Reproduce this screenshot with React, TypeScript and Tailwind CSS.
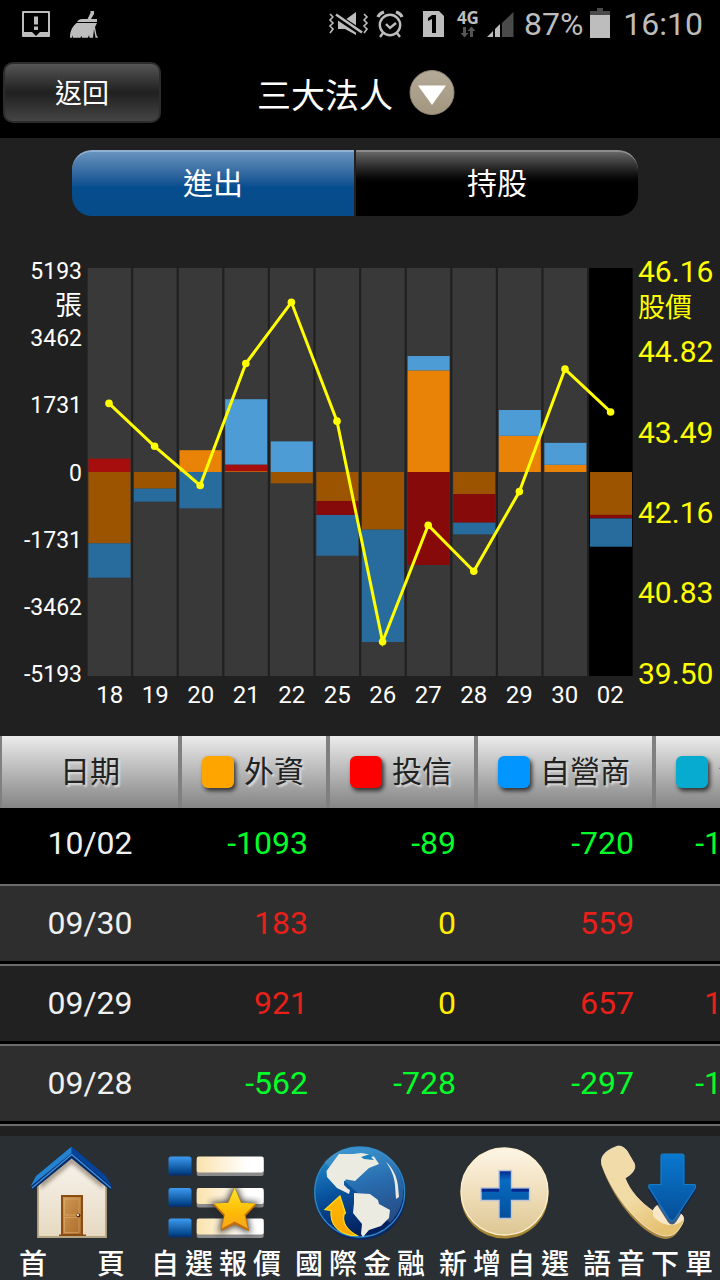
import type { ReactNode } from "react";

type Day = {
  day: string;
  up: [number, number, number];
  down: [number, number, number];
  price: number;
};

// Stacks are ordered from the zero line outwards: foreign, trust, dealer.
const days: Day[] = [
  { day: "18", up: [0, 340, 0], down: [1816, 0, 874], price: 43.95 },
  { day: "19", up: [0, 0, 0], down: [423, 0, 332], price: 43.25 },
  { day: "20", up: [555, 0, 0], down: [0, 0, 924], price: 42.61 },
  { day: "21", up: [20, 170, 1663], down: [0, 0, 0], price: 44.6 },
  { day: "22", up: [0, 0, 780], down: [288, 0, 0], price: 45.6 },
  { day: "25", up: [0, 0, 0], down: [738, 356, 1037], price: 43.66 },
  { day: "26", up: [0, 0, 0], down: [1468, 0, 2860], price: 40.06 },
  { day: "27", up: [2588, 0, 364], down: [0, 2367, 0], price: 41.96 },
  { day: "28", up: [0, 0, 0], down: [562, 728, 297], price: 41.21 },
  { day: "29", up: [921, 0, 657], down: [0, 0, 0], price: 42.51 },
  { day: "30", up: [183, 0, 559], down: [0, 0, 0], price: 44.51 },
  { day: "02", up: [0, 0, 0], down: [1093, 89, 720], price: 43.81 },
];

const volumeAxis = ["5193", "張", "3462", "", "1731", "", "0", "", "-1731", "", "-3462", "", "-5193"];
const priceAxis = ["46.16", "44.82", "43.49", "42.16", "40.83", "39.50"];

const rows = [
  { date: "10/02", values: [-1093, -89, -720, -1902] },
  { date: "09/30", values: [183, 0, 559, 742] },
  { date: "09/29", values: [921, 0, 657, 1578] },
  { date: "09/28", values: [-562, -728, -297, -1587] },
];

const upColors = ["#e88307", "#a60d0d", "#4d9cd5"];
const downColors = ["#9c5400", "#870a0b", "#286c9e"];

function Chart() {
  const mid = 204;
  const scale = 204 / 5193;
  const pitch = 45.6;
  const points = days.map((d, i) => ({
    x: 22 + i * pitch,
    y: 408 - ((d.price - 39.5) / 6.66) * 408,
  }));
  return (
    <svg viewBox="0 0 546 408" className="block h-auto w-full" role="img" aria-label="三大法人進出">
      {days.map((d, i) => {
        const x = 0.6 + i * pitch;
        const bars: ReactNode[] = [];
        let top = mid;
        d.up.forEach((v, k) => {
          top -= v * scale;
          if (v) bars.push(<rect key={`u${k}`} x={x + 0.8} y={top} width="42" height={v * scale} fill={upColors[k]} />);
        });
        let bottom = mid;
        d.down.forEach((v, k) => {
          if (v) bars.push(<rect key={`d${k}`} x={x + 0.8} y={bottom} width="42" height={v * scale} fill={downColors[k]} />);
          bottom += v * scale;
        });
        return (
          <g key={d.day}>
            <rect x={x} y="0" width="43.4" height="408" fill={i === days.length - 1 ? "#000" : "#393939"} />
            {bars}
          </g>
        );
      })}
      <polyline points={points.map((p) => `${p.x},${p.y}`).join(" ")} fill="none" stroke="#ffff00" strokeWidth="3" />
      {points.map((p) => (
        <circle key={p.x} cx={p.x} cy={p.y} r="3.8" fill="#ffff00" />
      ))}
    </svg>
  );
}

function StatusBar() {
  return (
    <div className="flex h-12 items-center pr-[17px] pl-[22px] text-[#bdbdbd]">
      <svg width="28" height="32" viewBox="0 0 28 32" fill="currentColor">
        <path fillRule="evenodd" d="M1 3h26a1 1 0 0 1 1 1v24a1 1 0 0 1-1 1H1a1 1 0 0 1-1-1V4a1 1 0 0 1 1-1Zm1 2v19h8l4 4 4-4h8V5Z" />
        <path d="M12 8.500h4v8h-4ZM12 18.500h4v3.500h-4Z" />
      </svg>
      <svg width="28" height="32" viewBox="0 0 28 32" className="ml-5" fill="currentColor">
        <path d="M20.500 3h3.500v3l-3 5h6v3H7c1-2 3-3 5-3h5.500l3-6Z" />
        <path d="M6.500 15H27l-2 4 1.500 8 1.500 2.700h-2.500L24 21l-1 8.700h-3.500L19 27l-1 2.700h-6l-.5-2-1 2H3L3 27l-1 2.700H0C0 22 3 18 6.500 15Z" />
      </svg>
      <div className="ml-auto flex items-center">
        <svg width="42" height="32" viewBox="0 0 42 32" fill="none" stroke="currentColor">
          <path d="M3 6l3 3-3 3 3 3-3 3 3 3-3 4M37 6l3 3-3 3 3 3-3 3 3 3-3 4" strokeWidth="1.600" />
          <path d="M11 12h7l11-8v23l-11-6h-7Z" fill="currentColor" stroke="none" />
          <path d="M8 7l27 18" stroke="#000" strokeWidth="6" />
          <path d="M9 6.500l26 18" strokeWidth="2.600" />
        </svg>
        <svg width="28" height="32" viewBox="0 0 28 32" className="ml-[7px]" fill="none" stroke="currentColor">
          <circle cx="14" cy="17" r="10.200" strokeWidth="2.400" />
          <path d="M10 16l4 4 6-5" strokeWidth="2.400" />
          <path d="M2 9c1-3 3-4 6-5M26 9c-1-3-3-4-6-5" strokeWidth="3.400" />
          <path d="M7 25l-3 4M21 25l3 4" strokeWidth="2.400" />
        </svg>
        <svg width="21" height="32" viewBox="0 0 21 32" className="ml-[19px]">
          <path d="M0 3h16l5 5v21H0Z" fill="currentColor" />
          <path d="M9 7h4v18H9V11l-4 2v-3Z" fill="#000" />
        </svg>
        <div className="ml-[13px] flex flex-col items-center">
          <span className="font-['Open_Sans'] text-[17px] leading-4 font-bold">4G</span>
          <svg width="16" height="12" viewBox="0 0 16 12" fill="#555">
            <path d="M3 1h3v6h2.500l-4 4.500-4-4.500H3ZM10 11h3V5h2.500l-4-4.500-4 4.500H10Z" />
          </svg>
        </div>
        <svg width="27" height="32" viewBox="0 0 27 32" className="ml-2" fill="currentColor">
          <path d="M0 29l6-6v6ZM8 29v-8l5-5v13Z" />
          <path d="M15 29V15L26.500 4v25Z" fill="#4a4a4a" />
        </svg>
        <span className="ml-[10px] text-[32px] leading-10">87%</span>
        <svg width="20" height="32" viewBox="0 0 20 32" className="ml-[7px]">
          <path d="M7 0h6v3h7v4H0V3h7Z" fill="#4a4a4a" />
          <path d="M0 7h20v23H0Z" fill="currentColor" />
        </svg>
        <span className="ml-[13px] text-[32px] leading-10">16:10</span>
      </div>
    </div>
  );
}

function Header() {
  return (
    <header className="bg-black pb-[15px]">
      <StatusBar />
      <div className="flex items-center pt-[14px] pl-[3px]">
        <button
          type="button"
          className="h-[61px] w-[158px] rounded-[10px] border-2 border-[#2c2c2c] bg-linear-to-b from-[#565656] via-[#202020] to-[#454545] pt-1 text-[27px]"
        >
          返回
        </button>
        <div className="flex flex-1 items-center justify-center gap-4">
          <h1 className="pt-1.5 text-[34px] leading-10">三大法人</h1>
          <button type="button" aria-label="選單">
            <svg width="46" height="46" viewBox="0 0 46 46">
              <defs>
                <linearGradient id="dropFace" x1="0" y1="0" x2="0" y2="1">
                  <stop offset="0" stopColor="#b5aa98" />
                  <stop offset="1" stopColor="#a2967f" />
                </linearGradient>
              </defs>
              <circle cx="23" cy="22.500" r="22" fill="url(#dropFace)" stroke="#8f8777" strokeWidth="1" />
              <path d="M9 15.500h28L23 35Z" fill="#fff" />
            </svg>
          </button>
        </div>
        <div className="w-[169px]" />
      </div>
    </header>
  );
}

function HeadCell({ label, swatch, width }: { label: string; swatch: string; width: string }) {
  return (
    <th scope="col" className={`${width} h-[72px] border-x-2 border-[#808080] p-0 pl-5 font-normal`}>
      <span className="flex items-center gap-[10px] whitespace-nowrap">
        <span className={`size-8 shrink-0 rounded-md shadow-[2px_3px_4px_#333] ${swatch}`} />
        {label}
      </span>
    </th>
  );
}

function tone(v: number) {
  if (v > 0) return "text-[#e92019]";
  if (v < 0) return "text-[#00ff2a]";
  return "text-[#ffee00]";
}

function DataTable() {
  return (
    <div className="overflow-x-auto [scrollbar-width:none]">
      <table className="w-[796px] min-w-full table-fixed border-separate border-spacing-0">
        <thead className="bg-linear-to-b from-[#ececec] to-[#858585] text-[30px] leading-9 text-[#222] [text-shadow:2px_2px_2px_#ddd]">
          <tr>
            <th scope="col" className="h-[72px] w-[180px] border-x-2 border-[#808080] p-0 font-normal">
              日期
            </th>
            <HeadCell label="外資" swatch="bg-[#ffa500]" width="w-[148px]" />
            <HeadCell label="投信" swatch="bg-[#ff0000]" width="w-[148px]" />
            <HeadCell label="自營商" swatch="bg-[#0095ff]" width="w-[178px]" />
            <HeadCell label="合計" swatch="bg-[#08abd0]" width="w-[142px]" />
          </tr>
        </thead>
        <tbody className="text-[32px] leading-10">
          {rows.map((r, i) => {
            const first = i === 0;
            const cell = first
              ? "h-[76px] bg-black pt-0 pb-[6px]"
              : i % 2
                ? "h-20 border-t-2 border-b-[3px] border-t-[#6c6c6c] border-b-black bg-[#2e2e2e] pt-0 pb-px"
                : "h-20 border-t-2 border-b-[3px] border-t-[#6c6c6c] border-b-black bg-[#212121] pt-0 pb-px";
            return (
              <tr key={r.date}>
                <th scope="row" className={`${cell} px-0 text-center font-normal text-[#f0f0f0]`}>
                  {r.date}
                </th>
                {r.values.map((v, k) => (
                  <td key={k} className={`${cell} pr-5 pl-0 text-right ${tone(v)}`}>
                    {v}
                  </td>
                ))}
              </tr>
            );
          })}
        </tbody>
      </table>
      <div className="h-3 border-t-2 border-[#6c6c6c]" />
    </div>
  );
}

function HouseIcon() {
  return (
    <svg width="96" height="100" viewBox="0 0 96 100">
      <defs>
        <linearGradient id="wall" x1="0" y1="0" x2="0" y2="1">
          <stop offset="0" stopColor="#f8f4ee" />
          <stop offset="1" stopColor="#e6d9c1" />
        </linearGradient>
        <linearGradient id="door" x1="0" y1="0" x2="1" y2="1">
          <stop offset="0" stopColor="#d09a55" />
          <stop offset="1" stopColor="#ab6b2a" />
        </linearGradient>
        <filter id="soft" x="-20%" y="-20%" width="140%" height="140%">
          <feGaussianBlur stdDeviation="2" />
        </filter>
      </defs>
      <path d="M14 94V40L47.700 13 82 40v54Z" fill="url(#wall)" stroke="#b5a582" strokeWidth="1.800" />
      <path d="M16 46 47.700 20 80 46v-7L47.700 14 16 39Z" fill="#6b5a44" opacity=".65" filter="url(#soft)" />
      <path d="M47.700 3.500 12 33 6.500 43.500 9 47 47.700 15.500 86 47l2.500-3L82 33Z" fill="#062a64" />
      <path d="M47.700 3.500 12 33 6.500 43.500 47.700 10Z" fill="#2482cf" />
      <path d="M47.700 3.500 82 33l6.500 11L47.700 10Z" fill="#06439a" />
      <path d="M8 45 47.700 11.500 87 45" fill="none" stroke="#3d8fdc" strokeWidth="1.400" />
      <path d="M35 91.500h27V93H35Z" fill="#8a4c13" />
      <rect x="38" y="53" width="20" height="39" fill="url(#door)" stroke="#8a4c13" strokeWidth="2" />
      <rect x="40.500" y="56" width="14.500" height="16" fill="none" stroke="#e2b578" strokeWidth=".5" />
      <rect x="40.500" y="74.500" width="14.500" height="15" fill="none" stroke="#e2b578" strokeWidth=".5" />
      <circle cx="54.500" cy="72.500" r="2" fill="#4e2809" />
      <circle cx="54" cy="72" r="1" fill="#fff" />
    </svg>
  );
}

function ListIcon() {
  return (
    <svg width="96" height="100" viewBox="0 0 96 100">
      <defs>
        <linearGradient id="block" x1="0" y1="0" x2="0" y2="1">
          <stop offset="0" stopColor="#3d9af0" />
          <stop offset=".8" stopColor="#05498f" />
          <stop offset="1" stopColor="#062c6c" />
        </linearGradient>
        <linearGradient id="bar" x1="0" y1="0" x2="1" y2="0">
          <stop offset="0" stopColor="#fbe2ac" />
          <stop offset=".75" stopColor="#fff" />
        </linearGradient>
        <linearGradient id="star" x1="0" y1="0" x2="0" y2="1">
          <stop offset="0" stopColor="#ffe32a" />
          <stop offset=".6" stopColor="#fdbb06" />
          <stop offset="1" stopColor="#f7a71a" />
        </linearGradient>
        <filter id="starGlow" x="-30%" y="-30%" width="160%" height="160%">
          <feGaussianBlur stdDeviation="3" />
        </filter>
      </defs>
      {[13.5, 45, 75.5].map((y) => (
        <g key={y}>
          <rect x=".5" y={y} width="23" height="19" rx="2.500" fill="url(#block)" />
          <rect x="28.700" y={y + 3} width="67" height="16.500" rx="2" fill="#8b8b8b" />
          <rect x="28.700" y={y} width="67" height="16" rx="2" fill="url(#bar)" />
        </g>
      ))}
      <path d="M66.700 45 73 59.700 88 61 77 72l3.300 15.700L66.700 80.500 53 87.700 56.300 72 45.500 61 60 59.700Z" fill="#222" stroke="#222" strokeWidth="4" opacity=".8" filter="url(#starGlow)" />
      <path d="M66.700 46 73 60.500 87.500 61.700 77 72.700l3.300 14.500L66.700 80.500 53.500 87.200 56.500 72.700 46 61.700 60.300 60.500Z" fill="#c26e0c" stroke="#c26e0c" strokeWidth="1.500" strokeLinejoin="round" />
      <path d="M66.700 45 73 59.700 87.500 60.500 76.500 71.500l3.300 14L66.700 78.500 53.700 85.500 56.800 71.500 46 60.500 60.300 59.700Z" fill="url(#star)" />
    </svg>
  );
}

function GlobeIcon() {
  return (
    <svg width="96" height="100" viewBox="0 0 96 100">
      <defs>
        <linearGradient id="sea" x1="0" y1="0" x2=".3" y2="1">
          <stop offset="0" stopColor="#2a9ad6" />
          <stop offset=".55" stopColor="#07509b" />
          <stop offset="1" stopColor="#05205f" />
        </linearGradient>
        <linearGradient id="turn" x1="0" y1="0" x2="0" y2="1">
          <stop offset="0" stopColor="#ffb800" />
          <stop offset="1" stopColor="#f9a602" />
        </linearGradient>
      </defs>
      <circle cx="48.500" cy="51.500" r="45.500" fill="#0a2763" />
      <circle cx="47.700" cy="49" r="45" fill="url(#sea)" stroke="#2b86c4" strokeWidth="1.300" />
      <path d="M12 19C28 1 62-2 80 18c15 18 16 42-2 62Z" fill="#7db4dd" opacity=".28" />
      <path d="M14.500 28 24 15l3-4 14 0 8-1 12 2 6 9-10 4-14 13-11-2 2 0 0 0-1 2-1 0 0 4 4 4 2 1-1 4-12-6-10-11Z" fill="#ecebe2" />
      <path d="M49 14l9-3 5 2-4 1 3 3-10-1Z" fill="#1c7fbd" />
      <path d="M42 50l16 1 8 6 1 4 11 6-1 8-8 8-12 4-6 7-2-3 1-10-9-11 1-10Z" fill="#ecebe2" />
      <path d="M74 19c6 5 11 14 12 24l1 11-3 2-1-14c-1-9-4-16-9-23Z" fill="#ecebe2" />
      <path d="M28 53 13 66.500l6 1c-1 13 6 22 20 25h6c-9-5-15-12-13-21l1.500-1.500Z" fill="url(#turn)" stroke="#ffdf1a" strokeWidth="1.200" />
    </svg>
  );
}

function PlusIcon() {
  return (
    <svg width="96" height="100" viewBox="0 0 96 100">
      <defs>
        <linearGradient id="coin" x1="0" y1="0" x2="0" y2="1">
          <stop offset="0" stopColor="#fdf5e6" />
          <stop offset=".5" stopColor="#f0dfbb" />
          <stop offset="1" stopColor="#dcc692" />
        </linearGradient>
        <linearGradient id="cross" x1="0" y1="0" x2="0" y2="1">
          <stop offset="0" stopColor="#06278c" />
          <stop offset=".2" stopColor="#086ac0" />
          <stop offset="1" stopColor="#04509c" />
        </linearGradient>
      </defs>
      <circle cx="48.500" cy="51.500" r="44" fill="#a98936" />
      <circle cx="48.500" cy="48.500" r="43.500" fill="url(#coin)" stroke="#fff0cf" strokeWidth="1.300" />
      <path d="M43 27.500h12.500V45H73.500v12.500h-18v18H43v-18H25V45h18Z" fill="url(#cross)" stroke="#bfc4d6" strokeWidth="1.400" />
      <path d="M25.700 45.700H43v3H25.700ZM55.500 45.700h17.300v3H55.500Z" fill="#06278c" />
    </svg>
  );
}

function PhoneIcon() {
  return (
    <svg width="96" height="100" viewBox="0 0 96 100">
      <defs>
        <linearGradient id="handset" x1="0" y1="0" x2=".6" y2="1">
          <stop offset="0" stopColor="#f0dbab" />
          <stop offset=".6" stopColor="#f1dba5" />
          <stop offset="1" stopColor="#e5c172" />
        </linearGradient>
        <linearGradient id="arrow" x1="0" y1="0" x2="0" y2="1">
          <stop offset="0" stopColor="#0a78cf" />
          <stop offset="1" stopColor="#064e98" />
        </linearGradient>
      </defs>
      <path d="M1 21c0-9 8-14 17-18 4 0 7 2 9 5l7 12c3 6-3 12-9 15 5 13 15 24 28 33 2-5 6-8 11-5l17 8c4 3 3 8 0 13-4 7-8 12-16 12C46 94 15 63 1 21Z" fill="#a58440" />
      <path d="M1.500 17c1-7 8-11 16.500-14 4 0 7 2 9 5l7 12c3 6-3 12-9 15 5 13 15 24 28 33 2-5 6-8 11-5l17 8c4 3 3 8 0 12-4 7-8 10-16 10C46 91 15 58 2 22Z" fill="url(#handset)" stroke="#f7e9c8" strokeWidth=".8" />
      <path d="M53 68c2-5 6-8 11-5l17 8c2 2 3 4 2 6-8 9-23 5-30-4Z" fill="#f6e8c6" />
      <path d="M62 13h21q2 0 2 2v28h10q2 1 0 4L76 77q-4 5-8 0L49 47q-2-4 1-4h11V15q0-2 1-2Z" fill="#082765" transform="translate(0 2)" opacity=".75" />
      <path d="M63 11h19q2 0 2 2v28.500h10.500q2 1 .5 4L75 76q-3 4-6 0L49.500 45.500q-2-3 .5-4H61V13q0-2 2-2Z" fill="url(#arrow)" stroke="#147ec8" strokeWidth="1.200" />
    </svg>
  );
}

const tabs = [
  { label: "首頁", width: "w-[106px]", icon: <HouseIcon /> },
  { label: "自選報價", width: "w-[130px]", icon: <ListIcon /> },
  { label: "國際金融", width: "w-[130px]", icon: <GlobeIcon /> },
  { label: "新增自選", width: "w-[130px]", icon: <PlusIcon /> },
  { label: "語音下單", width: "w-[130px]", icon: <PhoneIcon /> },
];

export default function App() {
  return (
    <div className="flex min-h-screen flex-col bg-[#202020] font-[Roboto,'Noto_Sans_CJK_TC',sans-serif] text-white">
      <Header />
      <main className="flex-1">
        <div className="flex gap-[2px] pt-3 pr-[82px] pl-[72px] text-[30px] leading-9 [text-shadow:1px_3px_3px_rgba(0,0,0,0.6)]">
          <button
            type="button"
            className="h-[66px] flex-1 rounded-l-[20px] border-t-2 border-[#8fb0d2] bg-linear-to-b from-[#6793be] via-[#064d8d] via-55% to-[#064b8a]"
          >
            進出
          </button>
          <button
            type="button"
            className="h-[66px] flex-1 rounded-r-[20px] border-t-2 border-[#8c8c8c] bg-linear-to-b from-[#666] via-black via-55% to-black"
          >
            持股
          </button>
        </div>

        <section className="flex h-[520px] items-start pt-[38px]">
          <div className="grid h-[437px] w-[87px] shrink-0 grid-rows-13 pr-[5px] text-right text-[23px] leading-9">
            {volumeAxis.map((t, i) => (
              <span key={i} className={t === "張" ? "text-[27px]" : undefined}>
                {t}
              </span>
            ))}
          </div>
          <div className="min-w-0 flex-1 pt-[14px]">
            <Chart />
            <div className="grid grid-cols-12 text-center text-[24px] leading-[38px]">
              {days.map((d) => (
                <span key={d.day}>{d.day}</span>
              ))}
            </div>
          </div>
          <div className="grid h-[482px] w-[87px] shrink-0 grid-rows-6 pl-[5px] text-[30px] leading-9 text-[#ffff00]">
            {priceAxis.map((t, i) => (
              <div key={t}>
                <div>{t}</div>
                {i === 0 && <div className="text-[27px]">股價</div>}
              </div>
            ))}
          </div>
        </section>

        <DataTable />
      </main>

      <nav className="grid grid-cols-5 bg-[#2a2f33] pt-[7px]">
        {tabs.map((t) => (
          <a key={t.label} href="#" className="flex flex-col items-center">
            {t.icon}
            <span className={`${t.width} pt-1.5 text-[28px] leading-[31px] font-medium [text-align-last:justify]`}>{t.label}</span>
          </a>
        ))}
      </nav>
    </div>
  );
}
